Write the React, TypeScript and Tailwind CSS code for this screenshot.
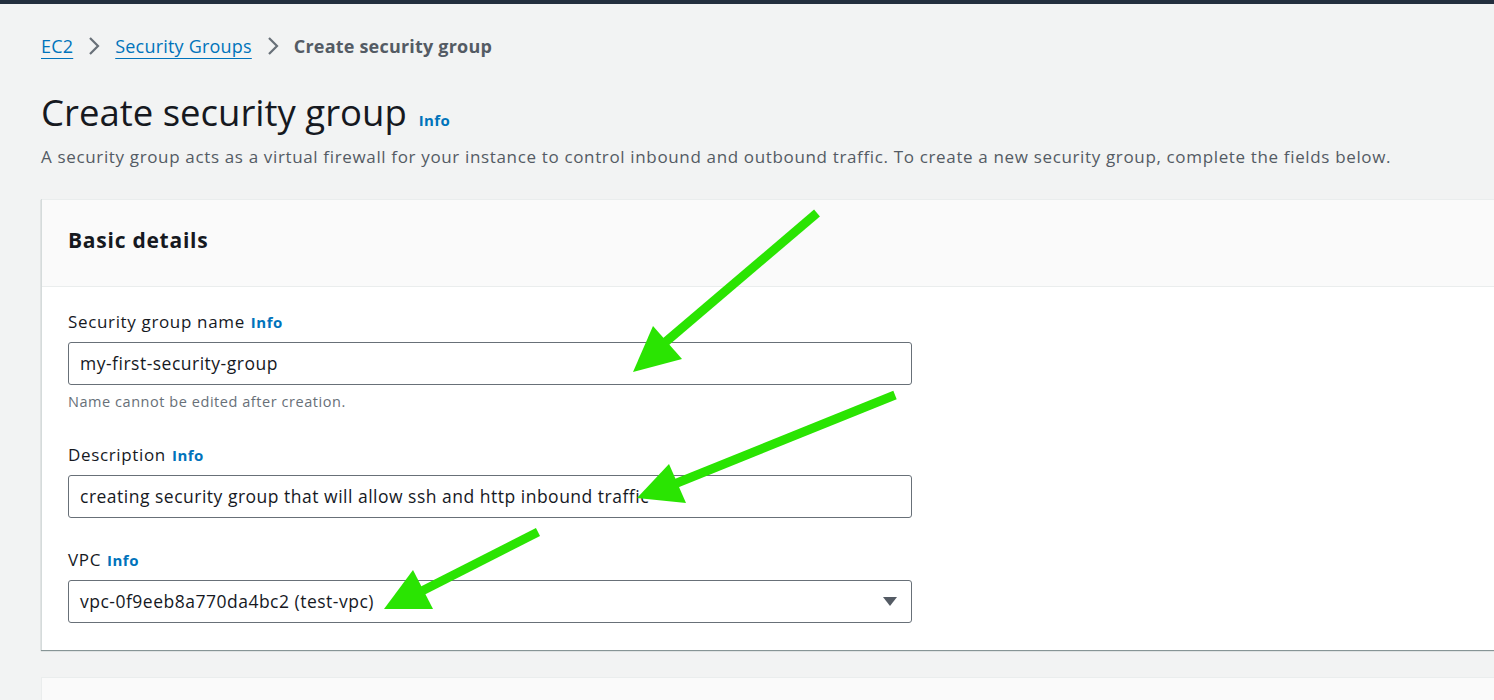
import React from 'react';

const font = { fontFamily: '"Open Sans", "Noto Sans", Arial, sans-serif' };

const Info = ({ className = '' }: { className?: string }) => (
  <span className={`ml-[6px] font-bold text-[#0073bb] ${className}`}>Info</span>
);

const Chevron = () => (
  <svg width="12" height="20" viewBox="0 0 12 20" className="mx-[15px]">
    <path d="M2 2 L10 10 L2 18" fill="none" stroke="#687078" strokeWidth="2.2" />
  </svg>
);

const Field = ({ label, value, select = false }: { label: string; value: string; select?: boolean }) => (
  <div>
    <div className="h-[24px] flex items-center text-[17px] tracking-[0.65px] text-[#16191f]">
      {label}
      <Info className="text-[15px] tracking-[0.5px]" />
    </div>
    <div className="mt-[8px] w-[844px] h-[43px] border border-[#687078] rounded-[3px] bg-white flex items-center pl-[11px] pr-[14px] text-[17.5px] tracking-[0.5px] text-[#16191f]">
      <span className="flex-1">{value}</span>
      {select && (
        <svg width="14" height="10" viewBox="0 0 14 10">
          <path d="M0 0 H14 L7 9 Z" fill="#545b64" />
        </svg>
      )}
    </div>
  </div>
);

// green annotation arrows drawn over the screenshot
const Arrow = ({ x1, y1, x2, y2, head }: { x1: number; y1: number; x2: number; y2: number; head: string }) => (
  <g>
    <line x1={x1} y1={y1} x2={x2} y2={y2} stroke="#2ae402" strokeWidth="9" />
    <polygon points={head} fill="#2ae402" />
  </g>
);

export default function App() {
  return (
    <div className="relative w-[1494px] h-[700px] overflow-hidden bg-[#f2f3f3]" style={font}>
      <div className="h-[4px] bg-[#232f3e]" />
      <div className="pl-[41px] pt-[30px]">
        <nav className="h-[24px] flex items-center text-[18px] tracking-[0.2px]">
          <span className="text-[#0073bb] underline underline-offset-[5px] decoration-1">EC2</span>
          <Chevron />
          <span className="text-[#0073bb] underline underline-offset-[5px] decoration-1">Security Groups</span>
          <Chevron />
          <span className="font-bold text-[#545b64]">Create security group</span>
        </nav>

        <div className="mt-[30px] h-[48px] flex items-end">
          <h1 className="text-[36.5px] leading-[48px] text-[#16191f]">Create security group</h1>
          <Info className="ml-[12px] mb-[5px] text-[15px] tracking-[0.4px]" />
        </div>
        <p className="mt-[9px] h-[24px] leading-[24px] text-[17px] tracking-[0.65px] text-[#545b64] whitespace-nowrap">
          A security group acts as a virtual firewall for your instance to control inbound and outbound traffic. To create a new security group, complete the fields below.
        </p>

        <section className="mt-[30px] w-[1500px] bg-white border-l border-[#d5dbdb] shadow-[0_1px_1px_0_#879596]">
          <div className="h-[88px] bg-[#fafafa] border-t border-[#eaeded] border-b pl-[26px] pt-[26px]">
            <h2 className="text-[21px] leading-[28px] tracking-[0.75px] font-bold text-[#16191f]">Basic details</h2>
          </div>
          <div className="pl-[26px] pt-[23px] pb-[27px]">
            <Field label="Security group name" value="my-first-security-group" />
            <div className="mt-[7px] h-[20px] leading-[20px] text-[14.5px] tracking-[0.55px] text-[#687078]">
              Name cannot be edited after creation.
            </div>
            <div className="mt-[31px]">
              <Field
                label="Description"
                value="creating security group that will allow ssh and http inbound traffic"
              />
            </div>
            <div className="mt-[30px]">
              <Field label="VPC" value="vpc-0f9eeb8a770da4bc2 (test-vpc)" select />
            </div>
          </div>
        </section>

        <section className="mt-[27px] w-[1500px] h-[60px] bg-[#fafafa] border-l border-t border-[#eaeded]" />
      </div>

      <svg className="absolute inset-0 pointer-events-none" width="1494" height="700">
        <Arrow x1={817} y1={213} x2={662} y2={345} head="633,372 653,326 682,359" />
        <Arrow x1={895} y1={395} x2={672} y2={485} head="637,498 669,464 686,503" />
        <Arrow x1={538} y1={532} x2={418} y2={593} head="384,609 413,570 433,609" />
      </svg>
    </div>
  );
}
